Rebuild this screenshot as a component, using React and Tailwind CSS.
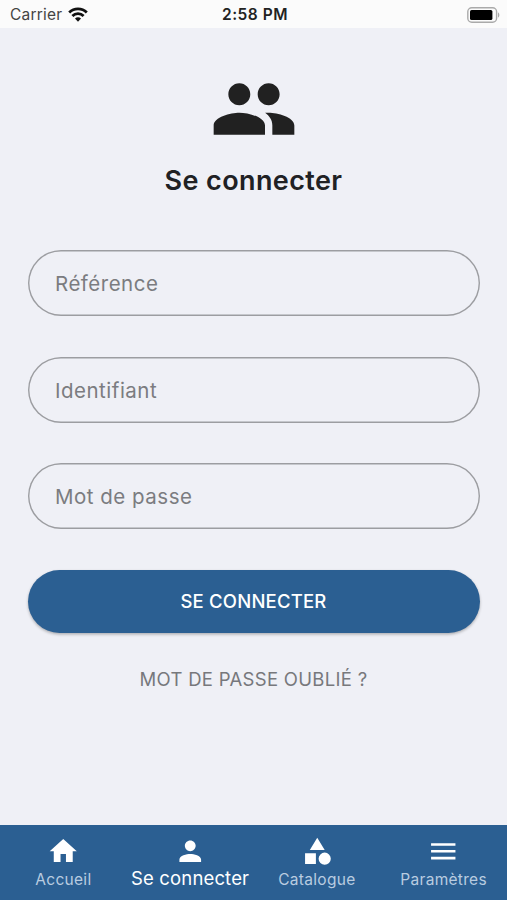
import React, { useState } from 'react';

// Material icon shapes, all on a 24x24 grid
const ICONS = {
  people:
    'M16 11c1.66 0 2.99-1.34 2.99-3S17.66 5 16 5c-1.66 0-3 1.34-3 3s1.34 3 3 3zm-8 0c1.66 0 2.99-1.34 2.99-3S9.66 5 8 5C6.34 5 5 6.34 5 8s1.34 3 3 3zm0 2c-2.33 0-7 1.17-7 3.5V19h14v-2.5c0-2.33-4.67-3.5-7-3.5zm8 0c-.29 0-.62.02-.97.05 1.16.84 1.97 1.97 1.97 3.45V19h6v-2.5c0-2.33-4.67-3.5-7-3.5z',
  home: 'M10 20v-6h4v6h5v-8h3L12 3 2 12h3v8z',
  person:
    'M12 12c2.21 0 4-1.79 4-4s-1.79-4-4-4-4 1.79-4 4 1.79 4 4 4zm0 2c-2.67 0-8 1.34-8 4v2h16v-2c0-2.66-5.33-4-8-4z',
  category:
    'M12 2l-5.5 9h11zM17.5 13a4.5 4.5 0 1 0 0 9 4.5 4.5 0 0 0 0-9zM3 13.5h8v8H3z',
  menu: 'M3 18h18v-2H3v2zm0-5h18v-2H3v2zm0-7v2h18V6H3z',
};

const FIELDS = [
  { name: 'reference', label: 'Référence', type: 'text' },
  { name: 'identifiant', label: 'Identifiant', type: 'text' },
  { name: 'password', label: 'Mot de passe', type: 'password' },
];

const TABS = [
  { icon: 'home', label: 'Accueil' },
  { icon: 'person', label: 'Se connecter' },
  { icon: 'category', label: 'Catalogue' },
  { icon: 'menu', label: 'Paramètres' },
];

function Icon({ name, className }) {
  return (
    <svg viewBox="0 0 24 24" fill="currentColor" className={className}>
      <path d={ICONS[name]} />
    </svg>
  );
}

function StatusBar() {
  return (
    <div className="h-7 shrink-0 bg-[#fbfbfb] grid grid-cols-3 items-center pl-[10px] pr-[7px] pt-px text-[15.5px] leading-none text-[#444]">
      <div className="flex items-center gap-[6px]">
        <span className="pt-px tracking-[0.2px]">Carrier</span>
        <svg viewBox="0 0 20 15" className="w-5 h-[15px] text-[#111]" fill="none" stroke="currentColor" strokeWidth="2.8">
          <path d="M1.2 5.4a12.6 12.6 0 0 1 17.6 0" />
          <path d="M4.4 8.9a8 8 0 0 1 11.2 0" />
          <path d="M10 14.8l-3-3.2a4.2 4.2 0 0 1 6 0z" fill="currentColor" stroke="none" />
        </svg>
      </div>
      <span className="pt-px text-center font-semibold tracking-[0.5px] text-[#222] whitespace-nowrap">
        2:58 PM
      </span>
      <svg viewBox="0 0 33 16" className="w-[33px] h-4 justify-self-end">
        <rect x="0.8" y="0.8" width="28.8" height="14.4" rx="4" fill="none" stroke="#aaa" strokeWidth="1.4" />
        <rect x="3" y="3" width="22.4" height="10" rx="1.6" fill="#000" />
        <path d="M31 5.5c1.8.6 1.8 4.4 0 5z" fill="#aaa" />
      </svg>
    </div>
  );
}

function App() {
  const [activeTab, setActiveTab] = useState(1);

  return (
    <div className="w-full h-screen flex flex-col overflow-hidden bg-[#eff0f6] font-[Inter,sans-serif]">
      <StatusBar />

      <main className="flex-1 flex flex-col items-center px-[27.5px] pt-[37px]">
        <Icon name="people" className="w-[88px] h-[88px] text-[#212121]" />
        <h1 className="mt-[11px] text-[27px] leading-[34px] font-semibold tracking-[0.4px] text-[#202124]">
          Se connecter
        </h1>

        <form className="w-full mt-[52px] flex flex-col" onSubmit={(e) => e.preventDefault()}>
          <div className="flex flex-col gap-[40.5px]">
            {FIELDS.map((field) => (
              <input
                key={field.name}
                type={field.type}
                placeholder={field.label}
                className="h-[66px] w-full rounded-full shadow-[inset_0_0_0_1.4px_#9c9da1] px-[27.5px] pt-px text-[20.5px] tracking-[0.5px] text-[#222] placeholder:text-[#7b7c80] outline-none"
              />
            ))}
          </div>
          <button
            type="submit"
            className="mt-[41px] h-[63px] w-full rounded-full bg-[#2b5f92] pt-px text-[18.5px] font-medium tracking-[0.2px] text-white shadow-[0_1.5px_3px_rgba(0,0,0,0.28)]"
          >
            SE CONNECTER
          </button>
        </form>

        <button className="mt-[34px] text-[18.5px] leading-6 tracking-[0.3px] text-[#77787c]">
          MOT DE PASSE OUBLIÉ ?
        </button>
      </main>

      <nav className="h-[75.5px] shrink-0 grid grid-cols-4 bg-[#2b5f92]">
        {TABS.map((tab, index) => (
          <button
            key={tab.label}
            className="flex flex-col items-center pt-[10px] text-white"
            onClick={() => setActiveTab(index)}
          >
            <Icon name={tab.icon} className="w-[32.5px] h-[32.5px]" />
            <span
              className={
                index === activeTab
                  ? 'text-[18.5px] leading-[22px] tracking-[0.15px] whitespace-nowrap'
                  : 'mt-[2px] text-[15.5px] leading-[22px] tracking-[0.3px] text-[#b9cce0]'
              }
            >
              {tab.label}
            </span>
          </button>
        ))}
      </nav>
    </div>
  );
}

export default App;
